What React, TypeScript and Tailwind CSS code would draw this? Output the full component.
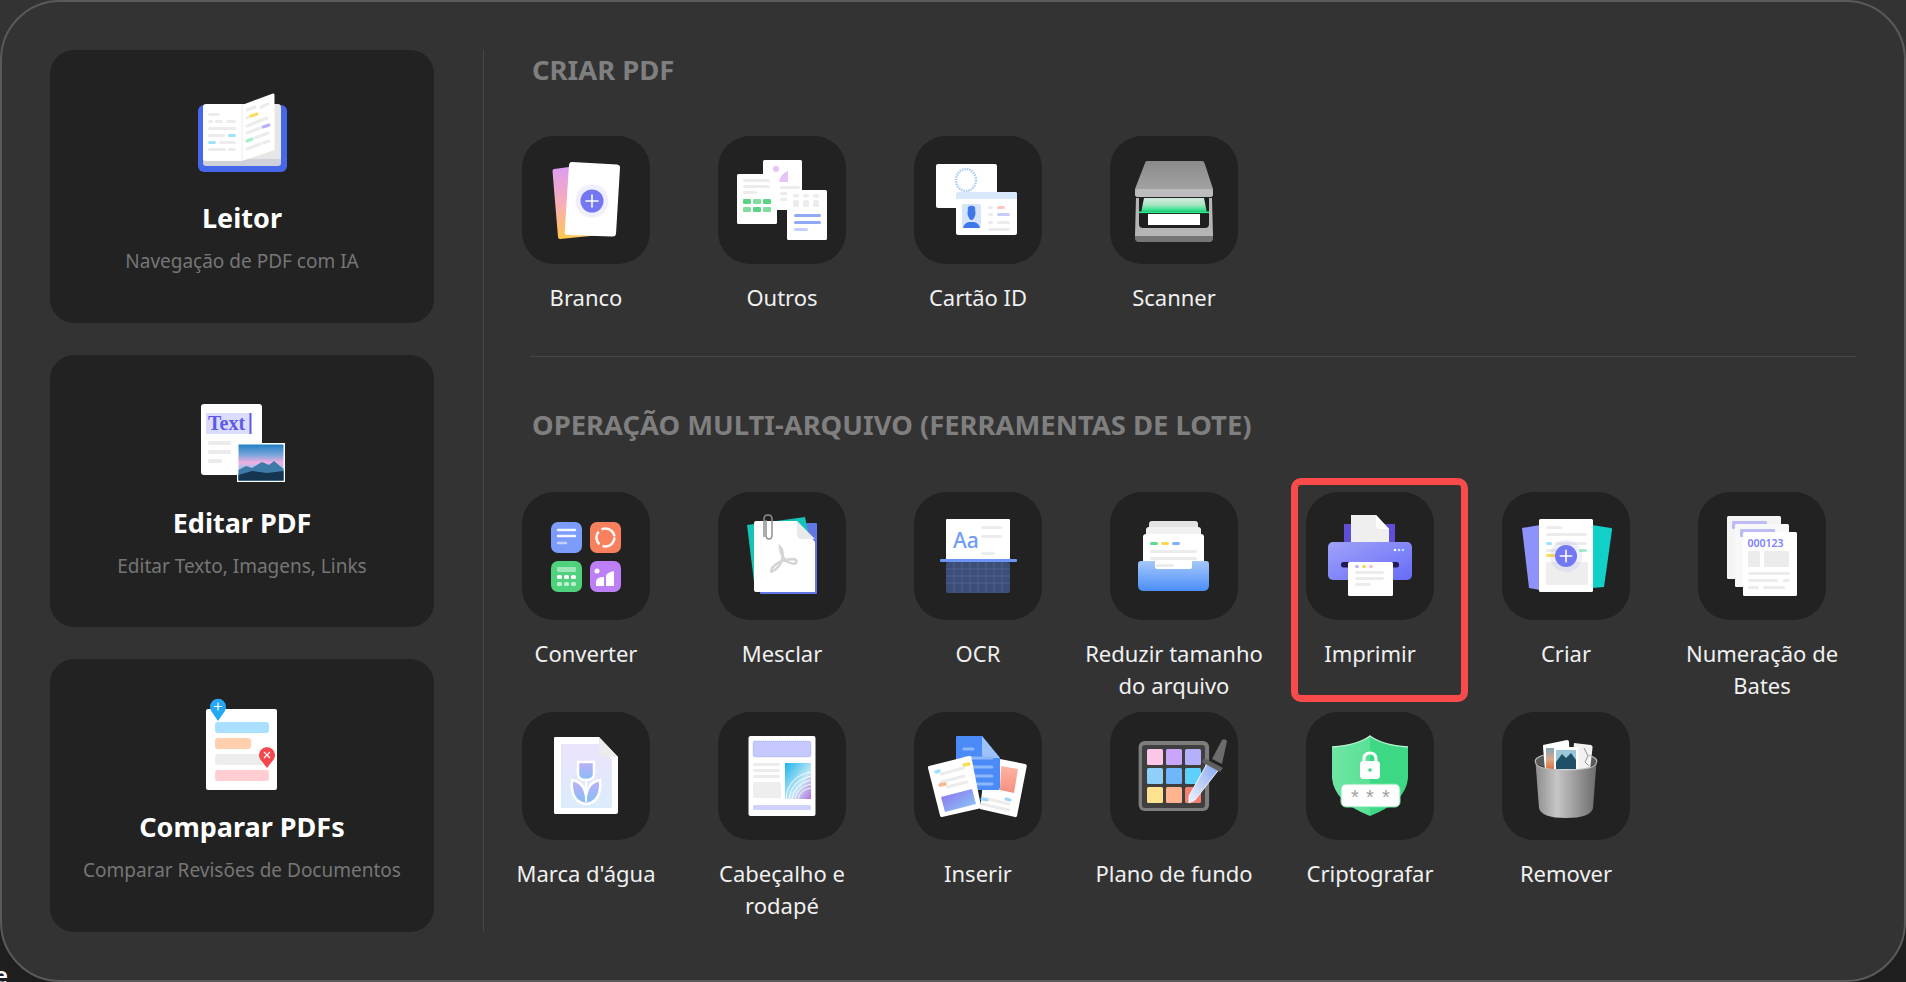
import type { ReactNode } from "react";

const fontStack = "font-['Noto_Sans','Open_Sans',sans-serif]";

function Bars({ items }: { items: [number, number, number, number, string?][] }) {
  return (
    <>
      {items.map(([x, y, w, h, fill], i) => (
        <rect key={i} x={x} y={y} width={w} height={h} rx={Math.min(h / 2, 1.5)} fill={fill ?? "#ececec"} />
      ))}
    </>
  );
}

function Sheet({ x, y, w, h, rx = 1.5, fill = "#fff" }: { x: number; y: number; w: number; h: number; rx?: number; fill?: string }) {
  return <rect x={x} y={y} width={w} height={h} rx={rx} fill={fill} />;
}

function PlusDot({ cx, cy, r }: { cx: number; cy: number; r: number }) {
  const a = r * 0.52;
  return (
    <>
      <circle cx={cx} cy={cy} r={r + 5} fill="#7b7ff5" opacity="0.12" />
      <circle cx={cx} cy={cy} r={r} fill="#7377f2" />
      <path d={`M${cx - a} ${cy}H${cx + a}M${cx} ${cy - a}V${cy + a}`} stroke="#fff" strokeWidth="1.6" strokeLinecap="round" />
    </>
  );
}

function TileIcon({ children }: { children: ReactNode }) {
  return (
    <svg viewBox="0 0 128 128" className="w-32 h-32">
      {children}
    </svg>
  );
}

const BookIcon = (
  <svg viewBox="0 0 120 120" className="w-[120px] h-[120px]">
    <rect x="16" y="30" width="89" height="67" rx="6" fill="#4568ea" />
    <rect x="21" y="80" width="78" height="11" rx="3" fill="#cfd0da" />
    <path d="M60 29H96Q99 29 99 33V84H60Z" fill="#e6e6e6" />
    <path d="M24 29H60V86H24Q21 86 21 83V32Q21 29 24 29Z" fill="#fff" />
    <path d="M60 30L91 18.5Q92.5 18 92.5 20V75L60 86Z" fill="#fff" />
    <path d="M60 30V86" stroke="#e5e5e5" strokeWidth="0.8" />
    <Bars
      items={[
        [26, 38, 12, 3],
        [26, 45, 5, 3],
        [33, 45, 8, 3],
        [44, 45, 10, 3],
        [26, 52, 28, 3],
        [26, 59, 17, 3],
        [46, 59, 8, 3, "#9fe3fb"],
        [26, 66, 8, 3, "#9fe3fb"],
        [37, 66, 17, 3],
        [26, 73, 18, 3],
        [46, 73, 8, 3],
      ]}
    />
    <g strokeWidth="3" strokeLinecap="round" fill="none">
      <path d="M65 35L73 32" stroke="#ececec" />
      <path d="M79 32L86 29" stroke="#ececec" />
      <path d="M65 43L67 42" stroke="#ececec" />
      <path d="M69 41L75 39" stroke="#fbdc5a" />
      <path d="M65 51L85 43" stroke="#ececec" />
      <path d="M65 58L78 53" stroke="#ececec" />
      <path d="M81 52L87 50" stroke="#b5b0fb" />
      <path d="M65 66L70 64" stroke="#9ff0c8" />
      <path d="M73 63L86 58" stroke="#ececec" />
      <path d="M65 74L78 69" stroke="#ececec" />
      <path d="M81 68L87 66" stroke="#ececec" />
    </g>
  </svg>
);

const EditIcon = (
  <svg viewBox="0 0 120 120" className="w-[120px] h-[120px]">
    <defs>
      <linearGradient id="sky" x1="0" y1="0" x2="0" y2="1">
        <stop offset="0" stopColor="#1f7fc4" />
        <stop offset="0.3" stopColor="#7fa6dc" />
        <stop offset="0.5" stopColor="#f0b0e2" />
        <stop offset="0.7" stopColor="#8cc4e8" />
        <stop offset="1" stopColor="#3d86b8" />
      </linearGradient>
    </defs>
    <Sheet x={19} y={24} w={61} h={71} rx={3} />
    <rect x="24" y="33" width="45" height="21" fill="#dcdcff" />
    <text x="26" y="50" fontFamily="'Liberation Serif',serif" fontWeight="700" fontSize="20" fill="#5b5be6">
      Text
    </text>
    <rect x="67.5" y="33" width="2" height="21" fill="#5b5be6" />
    <Bars
      items={[
        [26, 61, 23, 4],
        [26, 70, 23, 4],
        [26, 79, 14, 4],
      ]}
    />
    <rect x="55" y="63" width="48" height="39" fill="#fff" />
    <rect x="56.5" y="64.5" width="45" height="36" fill="url(#sky)" />
    <path d="M56.5 90L64 86L70 88L80 82L87 85L92 81L101.5 89V100.5H56.5Z" fill="#3d7ba8" />
    <path d="M56.5 95L70 91L85 93L101.5 91V100.5H56.5Z" fill="#143450" />
  </svg>
);

const CompareIcon = (
  <svg viewBox="0 0 120 120" className="w-[120px] h-[120px]">
    <Sheet x={24} y={25} w={71} h={81} rx={2} />
    <rect x="33" y="38" width="54" height="11" rx="3" fill="#a9e0ff" />
    <rect x="33" y="54" width="36" height="11" rx="3" fill="#ffcfae" />
    <rect x="33" y="70" width="52" height="11" rx="3" fill="#ededed" />
    <rect x="33" y="86" width="54" height="11" rx="3" fill="#ffcdd2" />
    <path d="M36 37L29.5 27.5A7.8 7.8 0 1 1 42.5 27.5Z" fill="#24a8f5" />
    <circle cx="36" cy="22.5" r="7.8" fill="#24a8f5" />
    <path d="M32 22.5H40M36 18.5V26.5" stroke="#fff" strokeWidth="1.2" />
    <path d="M85 84L78.5 75.5A7.8 7.8 0 1 1 91.5 75.5Z" fill="#f5474f" />
    <circle cx="85" cy="71" r="7.8" fill="#f5474f" />
    <path d="M82 68L88 74M88 68L82 74" stroke="#fff" strokeWidth="1.2" />
  </svg>
);

const icons: Record<string, ReactNode> = {
  branco: (
    <TileIcon>
      <defs>
        <linearGradient id="brancoBack" x1="0" y1="0" x2="0" y2="1">
          <stop offset="0" stopColor="#dc9cf4" />
          <stop offset="0.55" stopColor="#f9aeb5" />
          <stop offset="1" stopColor="#ffc64e" />
        </linearGradient>
      </defs>
      <path d="M32 33L62 29L88 98L38 103Q36 103 36 101L30.5 35Q30.5 33.3 32 33Z" fill="url(#brancoBack)" />
      <path d="M50 26L95 28.5Q98.5 29 98 32L94 98Q93.5 101 90 100.5L45 99Q42.5 99 42.7 96L47 29Q47.3 26 50 26Z" fill="#fff" />
      <PlusDot cx={70} cy={65} r={11.5} />
    </TileIcon>
  ),
  outros: (
    <TileIcon>
      <Sheet x={45} y={24} w={39} h={50} />
      <circle cx="58" cy="33" r="3" fill="#e5c4f7" />
      <path d="M53 46L58 38V46ZM61 46Q63 37 70 35V46Z" fill="#e5c4f7" />
      <Bars items={[[62, 50, 20, 3], [62, 56, 15, 3], [62, 62, 15, 3]]} />
      <Sheet x={19} y={38} w={40} h={50} />
      <Bars items={[[25, 43, 27, 3], [25, 49, 27, 3], [25, 55, 14, 3]]} />
      <g>
        <rect x="25" y="63" width="8" height="5" rx="1.2" fill="#5ad383" />
        <rect x="35" y="63" width="8" height="5" rx="1.2" fill="#7fdd9f" />
        <rect x="45" y="63" width="8" height="5" rx="1.2" fill="#5ad383" />
        <rect x="25" y="71" width="8" height="5" rx="1.2" fill="#7fdd9f" />
        <rect x="35" y="71" width="8" height="5" rx="1.2" fill="#5ad383" />
        <rect x="45" y="71" width="8" height="5" rx="1.2" fill="#7fdd9f" />
      </g>
      <Sheet x={69} y={54} w={40} h={50} />
      <Bars
        items={[
          [75, 58, 6, 3.5],
          [85, 58, 6, 3.5],
          [95, 58, 6, 3.5],
          [75, 64, 6, 7],
          [85, 64, 6, 7],
          [95, 64, 6, 7],
          [76, 78, 27, 3, "#8fa9f5"],
          [76, 85, 27, 3, "#8fa9f5"],
          [76, 92, 14, 3, "#c4d2fb"],
        ]}
      />
    </TileIcon>
  ),
  cartao: (
    <TileIcon>
      <Sheet x={22} y={28} w={61} h={44} rx={2} />
      <ellipse cx="52" cy="44" rx="10" ry="11" fill="none" stroke="#a9cdf5" strokeWidth="2.5" strokeDasharray="1.5 1" />
      <rect x="42" y="56" width="61" height="43" rx="2" fill="#fff" />
      <path d="M44 56H101Q103 56 103 58V63H42V58Q42 56 44 56Z" fill="#d9e9fd" />
      <rect x="48" y="68" width="19" height="24" rx="2" fill="#d5e3fb" />
      <path d="M54 71Q57.5 68.5 61 71L61.5 78Q60 84 57.5 84Q55 84 53.5 78ZM49 92Q50 87 55 86H60Q65 87 66 92Z" fill="#3f77ec" />
      <Bars
        items={[
          [74, 70, 5, 3],
          [83, 70, 8, 3, "#ffc6c6"],
          [74, 77, 5, 3],
          [83, 77, 13, 3, "#c6cdfb"],
          [74, 85, 5, 3],
          [83, 85, 13, 3],
          [74, 92, 22, 3],
        ]}
      />
    </TileIcon>
  ),
  scanner: (
    <TileIcon>
      <defs>
        <linearGradient id="lid" x1="0" y1="0" x2="0" y2="1">
          <stop offset="0" stopColor="#8b8b8b" />
          <stop offset="1" stopColor="#a8a8a8" />
        </linearGradient>
        <linearGradient id="glass" x1="0" y1="0" x2="0" y2="1">
          <stop offset="0" stopColor="#d5eadf" />
          <stop offset="0.45" stopColor="#a8e6c4" />
          <stop offset="0.82" stopColor="#2fe08a" />
          <stop offset="1" stopColor="#1c6a45" />
        </linearGradient>
      </defs>
      <path d="M26 62H102L103 100Q103 106 98 106H30Q25 106 25 100Z" fill="#b5b5b5" />
      <path d="M25 100H103V102Q103 106 99 106H29Q25 106 25 102Z" fill="#757575" />
      <path d="M29 62H99V88Q99 92 95 92H33Q29 92 29 88Z" fill="#1f1f1f" />
      <path d="M34 62H94L97 77H31Z" fill="url(#glass)" />
      <rect x="29" y="75.5" width="70" height="1.6" fill="#2bec8b" />
      <path d="M38 78H90V89H38Z" fill="#fff" />
      <path d="M37 25H92Q94 25 94.5 27L103 53V58Q103 61 100 61H28Q25 61 25 58V53L35 27Q35.5 25 37 25Z" fill="url(#lid)" />
      <rect x="25" y="53" width="78" height="8" rx="3" fill="#bdbdbd" />
    </TileIcon>
  ),
  converter: (
    <TileIcon>
      <rect x="29" y="30" width="31" height="31" rx="7" fill="#7d9bfb" />
      <path d="M36 38H53M36 44H53" stroke="#fff" strokeWidth="2.5" strokeLinecap="round" opacity="0.9" />
      <path d="M36 51H44" stroke="#fff" strokeWidth="2.5" strokeLinecap="round" opacity="0.55" />
      <rect x="68" y="30" width="31" height="31" rx="7" fill="#f9805f" />
      <circle cx="83.5" cy="45.5" r="9" fill="none" stroke="#fff" strokeWidth="2.5" strokeDasharray="17 3.5 14 3.5" opacity="0.95" />
      <rect x="29" y="69" width="31" height="31" rx="7" fill="#50d17e" />
      <rect x="35" y="75" width="19" height="5" rx="1" fill="#fff" opacity="0.45" />
      <Bars
        items={[
          [35, 83, 5, 4, "#fff"],
          [42, 83, 5, 4, "#fff"],
          [49, 83, 5, 4, "#fff"],
          [35, 90, 5, 4, "#bff0cf"],
          [42, 90, 5, 4, "#bff0cf"],
          [49, 90, 5, 4, "#bff0cf"],
        ]}
      />
      <rect x="68" y="69" width="31" height="31" rx="7" fill="#bd7ff5" />
      <circle cx="75" cy="79" r="2.5" fill="#fff" />
      <path d="M74 94V90Q74 85 82 85V94ZM84 94V84Q84 81 92 79V94Z" fill="#fff" />
    </TileIcon>
  ),
  mesclar: (
    <TileIcon>
      <rect x="42" y="31" width="57" height="71" rx="1" fill="#6277e6" />
      <path d="M29 33L87 25L90 40L40 99L37 98Z" fill="#14c4b8" />
      <path d="M38 29H79L97 50V100H38Q36 100 36 98V31Q36 29 38 29Z" fill="#fff" />
      <path d="M79 29L97 47H84Q79 47 79 42Z" fill="#e9e9e9" />
      <path d="M46 45V27Q46 23 50 23Q54 23 54 27V43Q54 47 51 47Q48 47 48 43V28" fill="none" stroke="#8f8f8f" strokeWidth="1.5" />
      <path d="M62 55Q66 59 64 68Q61 76 55 79Q52 81 54 76Q60 68 74 67Q80 67 78 71Q75 73 68 69Q63 64 62 55Z" fill="none" stroke="#d4d4d4" strokeWidth="2.5" />
    </TileIcon>
  ),
  ocr: (
    <TileIcon>
      <path d="M33 27H95Q96 27 96 28V67H32V28Q32 27 33 27Z" fill="#fff" />
      <text x="39" y="56" fontFamily="'Noto Sans',sans-serif" fontWeight="500" fontSize="21" fill="#6f9bfb">
        Aa
      </text>
      <Bars items={[[67, 34, 21, 3], [67, 43, 21, 3], [67, 60, 14, 3]]} />
      <rect x="32" y="70" width="64" height="31" rx="2" fill="#3b4e78" />
      <path d="M40 70V101M48 70V101M56 70V101M64 70V101M72 70V101M80 70V101M88 70V101M32 77H96M32 84H96M32 91H96" stroke="#5a6e9c" strokeWidth="0.6" />
      <rect x="26" y="67" width="77" height="3" rx="1" fill="#6b96f6" />
    </TileIcon>
  ),
  reduzir: (
    <TileIcon>
      <defs>
        <linearGradient id="tray" x1="0" y1="0" x2="0" y2="1">
          <stop offset="0" stopColor="#a5c8fb" />
          <stop offset="1" stopColor="#4b8ef8" />
        </linearGradient>
      </defs>
      <rect x="39" y="29" width="49" height="20" rx="3" fill="#e3e3e3" />
      <rect x="36" y="35" width="55" height="20" rx="3" fill="#f1f1f1" />
      <rect x="33" y="42" width="61" height="40" rx="3" fill="#fff" />
      <Bars
        items={[
          [40, 50, 8, 3, "#5fd88b"],
          [51, 50, 8, 3, "#f7d94f"],
          [62, 50, 8, 3, "#7fb0f7"],
          [40, 58, 47, 3],
          [40, 65, 47, 3],
          [46, 72, 18, 3],
        ]}
      />
      <path d="M31 69H45V75Q45 77 47 77H80Q82 77 82 75V69H96Q99 69 99 72V93Q99 99 93 99H34Q28 99 28 93V72Q28 69 31 69Z" fill="url(#tray)" />
    </TileIcon>
  ),
  imprimir: (
    <TileIcon>
      <defs>
        <linearGradient id="printer" x1="0" y1="0" x2="1" y2="1">
          <stop offset="0" stopColor="#a0a2fa" />
          <stop offset="1" stopColor="#676cf6" />
        </linearGradient>
      </defs>
      <rect x="38" y="32" width="51" height="20" fill="#5f4fd6" />
      <path d="M45 23H70L83 37V52H45Z" fill="#efefef" />
      <path d="M70 23L83 37H74Q70 37 70 33Z" fill="#fff" />
      <rect x="22" y="50" width="84" height="38" rx="5" fill="url(#printer)" />
      <circle cx="89" cy="58" r="1.3" fill="#fff" />
      <circle cx="93" cy="58" r="1.3" fill="#cfe0ff" />
      <circle cx="97" cy="58" r="1.3" fill="#9be8f5" />
      <rect x="35" y="70" width="58" height="5.5" rx="2.5" fill="#1e1b55" />
      <rect x="42" y="70" width="45" height="34" rx="1.5" fill="#fff" />
      <Bars
        items={[
          [49, 73, 4, 3, "#bdb7f9"],
          [56, 73, 4, 3, "#f7d94f"],
          [63, 73, 4, 3, "#f8bce0"],
          [49, 79, 29, 3],
          [49, 85, 29, 3],
          [49, 91, 16, 3],
        ]}
      />
    </TileIcon>
  ),
  criar: (
    <TileIcon>
      <path d="M20 36L38 33V98L27 96Z" fill="#8e92fb" />
      <path d="M90 33L109 36Q110.5 36.5 110 38L102 95L90 96Z" fill="#10d0c8" />
      <rect x="37" y="27" width="54" height="73" rx="1.5" fill="#fff" />
      <Bars
        items={[
          [44, 34, 16, 3],
          [44, 41, 41, 3],
          [44, 50, 6, 3, "#9fe3fb"],
          [53, 50, 32, 3],
          [44, 57, 25, 3],
          [77, 57, 8, 3, "#9ff0c8"],
          [44, 62, 10, 3, "#fbdc5a"],
          [44, 70, 42, 23, "#eeeeee"],
        ]}
      />
      <PlusDot cx={64} cy={64} r={11} />
    </TileIcon>
  ),
  bates: (
    <TileIcon>
      <Sheet x={29} y={24} w={54} h={63} fill="#f4f4f4" />
      <rect x="34" y="29" width="35" height="8" rx="1" fill="#bcbdf6" />
      <Sheet x={37} y={32} w={54} h={63} fill="#f8f8f8" />
      <rect x="42" y="37" width="35" height="8" rx="1" fill="#bcbdf6" />
      <Sheet x={45} y={40} w={54} h={64} />
      <text x="49.5" y="54.5" fontFamily="'Noto Sans',sans-serif" fontWeight="600" fontSize="10.5" fill="#7a7ffb">
        000123
      </text>
      <Bars
        items={[
          [50, 59, 12, 16],
          [66, 59, 25, 16],
          [50, 80, 42, 3],
          [50, 87, 30, 3],
          [85, 87, 7, 3],
          [50, 94, 11, 3],
          [65, 94, 22, 3],
        ]}
      />
    </TileIcon>
  ),
  marca: (
    <TileIcon>
      <defs>
        <linearGradient id="wmBg" x1="0" y1="0" x2="0" y2="1">
          <stop offset="0" stopColor="#ebe3fc" />
          <stop offset="1" stopColor="#dcecfd" />
        </linearGradient>
        <linearGradient id="wmFlower" x1="0" y1="0" x2="0" y2="1">
          <stop offset="0" stopColor="#bdb0f8" />
          <stop offset="1" stopColor="#85bdf7" />
        </linearGradient>
      </defs>
      <path d="M33 25H77L96 45V100Q96 102 94 102H33Q32 102 32 100V26Q32 25 33 25Z" fill="#fff" />
      <path d="M39 32H76L90 48V94Q90 96 88 96H39Q39 96 39 94Z" fill="url(#wmBg)" />
      <path d="M77 25L96 45H82Q77 45 77 41Z" fill="#ececec" />
      <path d="M56 50H72V62Q72 68 64 68Q56 68 56 62Z" fill="url(#wmFlower)" stroke="#fff" strokeWidth="2.5" />
      <path d="M64 92Q48 90 50 68Q62 70 64 84Q66 70 78 68Q80 90 64 92Z" fill="url(#wmFlower)" stroke="#fff" strokeWidth="2.5" />
      <path d="M64 68V90" stroke="#fff" strokeWidth="2" />
    </TileIcon>
  ),
  cabecalho: (
    <TileIcon>
      <defs>
        <linearGradient id="swirl" x1="0" y1="0" x2="1" y2="1">
          <stop offset="0" stopColor="#18b4ee" />
          <stop offset="0.6" stopColor="#c7e8f5" />
          <stop offset="1" stopColor="#b56fe0" />
        </linearGradient>
      </defs>
      <Sheet x={30.5} y={24} w={67} h={80} rx={2} />
      <rect x="35" y="29" width="58" height="16" rx="2" fill="#c5c8fd" stroke="#8a8ef0" strokeWidth="0.5" strokeDasharray="1 1" />
      <Bars
        items={[
          [35, 51, 27, 3],
          [35, 57, 27, 3],
          [35, 63, 27, 3],
          [35, 70, 28, 16, "#eeeeee"],
          [35, 93, 58, 5, "#cfd2fd"],
        ]}
      />
      <rect x="67" y="51" width="26" height="36" fill="url(#swirl)" />
      <path d="M68 87Q70 64 93 60M71 87Q73 68 93 64M74 87Q76 72 93 68M77 87Q79 75 93 72M80 87Q82 78 93 76" fill="none" stroke="#fff" strokeWidth="1" opacity="0.85" />
    </TileIcon>
  ),
  inserir: (
    <TileIcon>
      <defs>
        <linearGradient id="insPic" x1="0" y1="0" x2="1" y2="1">
          <stop offset="0" stopColor="#8c6cf0" />
          <stop offset="1" stopColor="#8bd0f5" />
        </linearGradient>
        <linearGradient id="insPic2" x1="0" y1="0" x2="0" y2="1">
          <stop offset="0" stopColor="#ffb4a2" />
          <stop offset="1" stopColor="#f58f80" />
        </linearGradient>
      </defs>
      <path d="M86 47L111 52Q113 52.5 112.8 54L103 104Q102.5 105.5 101 105L66 97L72 45Z" fill="#fff" />
      <path d="M87 54L104 57L100 81L86 78Z" fill="url(#insPic2)" />
      <path d="M70 86L95 92M68 92L95 98" stroke="#ececec" strokeWidth="3" strokeLinecap="round" />
      <path d="M68 87L73 88M92 87L96 88" stroke="#9fd4fb" strokeWidth="3" strokeLinecap="round" />
      <path d="M43 24H68L86 46V76Q86 78 84 78H43Q42 78 42 76V25Q42 24 43 24Z" fill="#4a8bf8" />
      <path d="M68 24L86 46H72Q68 46 68 42Z" fill="#9dc1fa" />
      <path d="M50 37H59M50 46H78M50 55H78M50 64H78M50 72H78" stroke="#8cb6fa" strokeWidth="3" strokeLinecap="round" />
      <path d="M15 54L55 44Q57 43.5 57.3 45L67 94Q67.3 96 65.5 96.5L28 105Q26.5 105.3 26 103.5L14 56Q13.7 54.5 15 54Z" fill="#fff" />
      <path d="M27 85L58 77L62 92L31 100Z" fill="url(#insPic)" />
      <path d="M27 62L50 56M27 70L50 64M33 75L53 70" stroke="#ececec" strokeWidth="3" strokeLinecap="round" />
      <path d="M22 60L25 59" stroke="#9fe3fb" strokeWidth="3.5" strokeLinecap="round" />
      <path d="M50 53L55 52" stroke="#fbdc5a" strokeWidth="3.5" strokeLinecap="round" />
      <path d="M26 73L31 72" stroke="#fbb58f" strokeWidth="3.5" strokeLinecap="round" />
    </TileIcon>
  ),
  plano: (
    <TileIcon>
      <defs>
        <linearGradient id="dropper" x1="1" y1="0" x2="0" y2="1">
          <stop offset="0" stopColor="#7fa2ee" />
          <stop offset="1" stopColor="#eef3ff" />
        </linearGradient>
      </defs>
      <rect x="28.6" y="29" width="70.5" height="70" rx="6" fill="#7d7d7d" />
      <rect x="32" y="33" width="63" height="63" rx="3" fill="#3f3f3f" />
      <Bars
        items={[
          [37, 37, 16, 16, "#fbc7e8"],
          [56, 37, 16, 16, "#c9a6fb"],
          [75, 37, 16, 16, "#b5b0fb"],
          [37, 56, 16, 16, "#8fd0fb"],
          [56, 56, 16, 16, "#6fb6fb"],
          [75, 56, 16, 16, "#5dd0fb"],
          [37, 75, 16, 16, "#ffe28f"],
          [56, 75, 16, 16, "#ffb48f"],
          [75, 75, 16, 16, "#f5806f"],
        ]}
      />
      <path d="M98 50L110 56L85 88L79 91L79 84Z" fill="url(#dropper)" stroke="#f4f6ff" strokeWidth="1" strokeLinejoin="round" />
      <path d="M94 46L113 56L110 60L92 50Z" fill="#5f5f5f" />
      <path d="M102 47L112 28Q115 26 117 29L112 52Z" fill="#6c6c6c" />
    </TileIcon>
  ),
  cripto: (
    <TileIcon>
      <defs>
        <linearGradient id="shield" x1="0" y1="0" x2="1" y2="0">
          <stop offset="0" stopColor="#6ee6a3" />
          <stop offset="0.5" stopColor="#5ae097" />
          <stop offset="0.5" stopColor="#3dd884" />
          <stop offset="1" stopColor="#3dd884" />
        </linearGradient>
      </defs>
      <path d="M64 24Q76 33 102 35V66Q100 90 64 104Q28 90 26 66V35Q52 33 64 24Z" fill="url(#shield)" />
      <path d="M26 35Q52 33 64 24Q76 33 102 35" fill="none" stroke="#b5f2d0" strokeWidth="1.5" />
      <path d="M58 50V47Q58 41 64 41Q70 41 70 47V50" fill="none" stroke="#fff" strokeWidth="3" />
      <rect x="54" y="49" width="20" height="18" rx="3.5" fill="#fff" />
      <circle cx="64" cy="58" r="1.8" fill="#3dd884" />
      <rect x="35" y="72" width="59" height="23" rx="5" fill="#fff" stroke="#6ee6a3" strokeWidth="1" />
      <g fontFamily="'Liberation Sans',sans-serif" fontSize="20" fill="#a1a1a1" textAnchor="middle">
        <text x="49" y="92">*</text>
        <text x="64" y="92">*</text>
        <text x="80" y="92">*</text>
      </g>
    </TileIcon>
  ),
  remover: (
    <TileIcon>
      <defs>
        <linearGradient id="can" x1="0" y1="0" x2="1" y2="0">
          <stop offset="0" stopColor="#8d8d8d" />
          <stop offset="0.35" stopColor="#c6c6c6" />
          <stop offset="1" stopColor="#6c6c6c" />
        </linearGradient>
        <linearGradient id="pic" x1="0" y1="0" x2="0" y2="1">
          <stop offset="0" stopColor="#7ea6b8" />
          <stop offset="0.5" stopColor="#d9a98c" />
          <stop offset="1" stopColor="#d9703d" />
        </linearGradient>
      </defs>
      <ellipse cx="64" cy="49" rx="30.5" ry="8.5" fill="#5a5a5a" />
      <path d="M72 31L89 33Q91 34 90.5 36L88 58L70 57Z" fill="#f2f2f2" />
      <path d="M82 36L86 44L83 50L87 54" stroke="#333" strokeWidth="0.5" fill="none" />
      <path d="M41 33L65 28Q67 28 67 30L68 58H43L41 35Z" fill="#fff" />
      <rect x="44" y="36" width="22" height="22" fill="url(#pic)" />
      <rect x="52" y="35" width="24" height="24" fill="#fff" />
      <rect x="54" y="38" width="20" height="19" fill="#9cc7d9" />
      <path d="M54 50L60 42L64 46L69 41L74 48V57H54Z" fill="#1f5068" />
      <path d="M33.5 50Q34 58 64 58Q94 58 94.5 50L91 96Q89 106 64 106Q39 106 37 96Z" fill="url(#can)" />
      <path d="M33.5 50A30.5 8.5 0 0 1 42 43M86 43A30.5 8.5 0 0 1 94.5 50Q94 58 64 58Q34 58 33.5 50" fill="none" stroke="#bdbdbd" strokeWidth="1.2" />
    </TileIcon>
  ),
};

type Tool = { id: string; label: string };

const createTools: Tool[] = [
  { id: "branco", label: "Branco" },
  { id: "outros", label: "Outros" },
  { id: "cartao", label: "Cartão ID" },
  { id: "scanner", label: "Scanner" },
];

const batchTools: Tool[] = [
  { id: "converter", label: "Converter" },
  { id: "mesclar", label: "Mesclar" },
  { id: "ocr", label: "OCR" },
  { id: "reduzir", label: "Reduzir tamanho\ndo arquivo" },
  { id: "imprimir", label: "Imprimir" },
  { id: "criar", label: "Criar" },
  { id: "bates", label: "Numeração de\nBates" },
  { id: "marca", label: "Marca d'água" },
  { id: "cabecalho", label: "Cabeçalho e\nrodapé" },
  { id: "inserir", label: "Inserir" },
  { id: "plano", label: "Plano de fundo" },
  { id: "cripto", label: "Criptografar" },
  { id: "remover", label: "Remover" },
];

const modes = [
  { title: "Leitor", sub: "Navegação de PDF com IA", icon: BookIcon },
  { title: "Editar PDF", sub: "Editar Texto, Imagens, Links", icon: EditIcon },
  { title: "Comparar PDFs", sub: "Comparar Revisões de Documentos", icon: CompareIcon },
];

function ToolTile({ tool }: { tool: Tool }) {
  return (
    <div className="relative flex flex-col items-center">
      {tool.id === "imprimir" && (
        <div className="absolute left-[-15px] top-[-14px] w-[177px] h-[224px] rounded-[10px] border-[7px] border-[#fa4b4b]" />
      )}
      <div className="w-32 h-32 shrink-0 rounded-[32px] bg-[#222222]">{icons[tool.id]}</div>
      <div className="mt-[17px] w-[196px] shrink-0 text-center text-[22px] leading-8 text-[#f0f0f0] whitespace-pre-line">
        {tool.label}
      </div>
    </div>
  );
}

export default function App() {
  return (
    <div className={`relative h-screen w-screen overflow-hidden bg-[linear-gradient(#333333_50%,#1e1e1e_50%)] ${fontStack}`}>
      <div className="flex h-full rounded-[60px] border-2 border-[#5a5a5a] bg-[#333333] p-12">
        <div className="flex w-[384px] shrink-0 flex-col gap-8">
          {modes.map((mode) => (
            <div key={mode.title} className="flex flex-1 flex-col items-center rounded-3xl bg-[#222222] pt-[25px]">
              {mode.icon}
              <div className="mt-[5px] text-[27px] leading-9 font-bold text-white">{mode.title}</div>
              <div className="mt-[9px] text-[19px] leading-8 text-[#767676]">{mode.sub}</div>
            </div>
          ))}
        </div>

        <div className="ml-[49px] w-px shrink-0 bg-[#464646]" />

        <div className="flex-1 pl-[38px]">
          <h2 className="ml-[10px] text-[27.4px] leading-10 font-bold text-[#7f7f7f]">CRIAR PDF</h2>
          <div className="mt-[46px] grid grid-cols-[repeat(7,128px)] gap-x-[68px]">
            {createTools.map((tool) => (
              <ToolTile key={tool.id} tool={tool} />
            ))}
          </div>

          <div className="ml-2 mt-[43px] h-px w-[1326px] bg-[#464646]" />

          <h2 className="ml-[10px] mt-[48px] text-[27.4px] leading-10 font-bold text-[#7f7f7f]">
            OPERAÇÃO MULTI-ARQUIVO (FERRAMENTAS DE LOTE)
          </h2>
          <div className="mt-[47px] grid grid-cols-[repeat(7,128px)] gap-x-[68px] gap-y-[11px]">
            {batchTools.map((tool) => (
              <ToolTile key={tool.id} tool={tool} />
            ))}
          </div>
        </div>
      </div>
      <span className="absolute bottom-[-7px] left-[-6px] text-[24px] leading-7 font-semibold text-white">e</span>
    </div>
  );
}
